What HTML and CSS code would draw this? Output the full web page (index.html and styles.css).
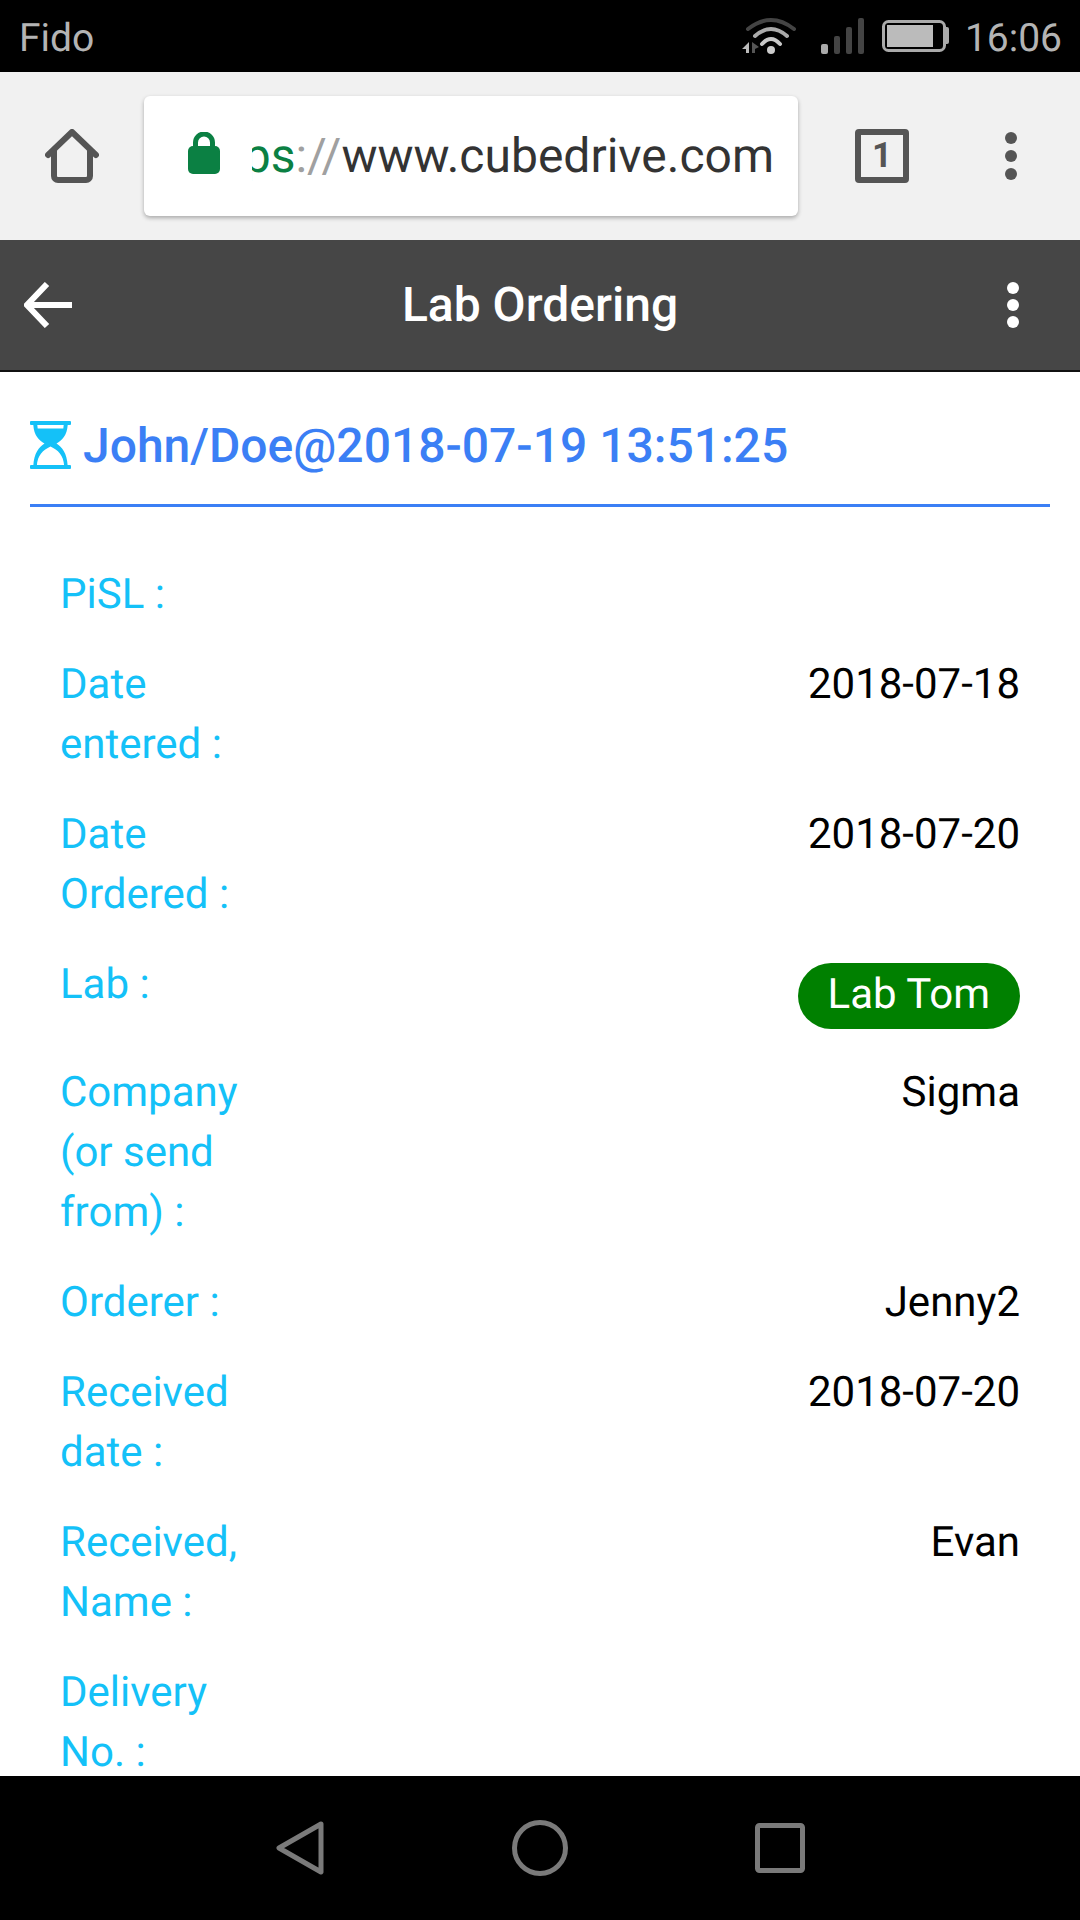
FILE: index.html
```html
<!DOCTYPE html>
<html>
<head lang="en">
    <meta charset="UTF-8">
    <title>Lab Ordering</title>
    <link rel="stylesheet" href="styles.css">
</head>
<body>
<div id="phone">
    <div id="status">
        <span class="carrier">Fido</span>
        <div class="status-right">
            <svg class="ic-wifi" width="56" height="38" viewBox="0 0 56 38">
                <path d="M7 12 Q30 -6 53 12" fill="none" stroke="#444" stroke-width="4" stroke-linecap="round"/>
                <path d="M14 19 Q30 5 46 19" fill="none" stroke="#aaa" stroke-width="4" stroke-linecap="round"/>
                <path d="M21 27 Q30 17 39 27" fill="none" stroke="#c8c8c8" stroke-width="4" stroke-linecap="round"/>
                <circle cx="30" cy="33" r="4" fill="#ccc"/>
                <path d="M8 25 L8 36 L5 36 L5 32 L1 32 Z" fill="#bbb"/>
                <path d="M11 25 L18 30 L14 32 L14 36 L11 36 Z" fill="#555"/>
            </svg>
            <svg class="ic-signal" width="43" height="36" viewBox="0 0 43 36">
                <rect x="0" y="26" width="7" height="10" rx="2" fill="#aaa"/>
                <rect x="13" y="18" width="6" height="18" rx="2" fill="#444"/>
                <rect x="25" y="9" width="6" height="27" rx="2" fill="#444"/>
                <rect x="37" y="0" width="6" height="36" rx="2" fill="#444"/>
            </svg>
            <svg class="ic-battery" width="67" height="32" viewBox="0 0 67 32">
                <rect x="1.5" y="1.5" width="61" height="29" rx="5" fill="none" stroke="#aaa" stroke-width="3"/>
                <rect x="5" y="5" width="46" height="22" fill="#bbb"/>
                <path d="M64 7 h1 a2 2 0 0 1 2 2 v13 a2 2 0 0 1 -2 2 h-1 Z" fill="#aaa"/>
            </svg>
            <span class="time">16:06</span>
        </div>
    </div>

    <div id="toolbar">
        <svg class="tb-home" width="54" height="54" viewBox="0 0 54 54">
            <path d="M3 26 L27 3 L51 26 M9 21 V47 a4 4 0 0 0 4 4 H41 a4 4 0 0 0 4 -4 V21" fill="none" stroke="#555" stroke-width="6" stroke-linecap="round" stroke-linejoin="round"/>
        </svg>
        <div class="omnibox">
            <svg class="lock" width="32" height="42" viewBox="0 0 32 42">
                <path d="M7.5 17 V10.5 a8.5 8.5 0 0 1 17 0 V17" fill="none" stroke="#0b8043" stroke-width="5"/>
                <rect x="0" y="14" width="32" height="28" rx="5" fill="#0b8043"/>
            </svg>
            <div class="url"><span class="url-inner"><span class="scheme">https</span><span class="sep">://</span>www.cubedrive.com</span></div>
        </div>
        <div class="tab-count">1</div>
        <div class="dots dots-grey"><i></i><i></i><i></i></div>
    </div>

    <div id="appbar">
        <svg class="back" width="48" height="46" viewBox="0 0 48 46">
            <path d="M48 23 H4 M23 2 L3 23 L23 44" fill="none" stroke="#fff" stroke-width="6"/>
        </svg>
        <div class="app-title">Lab Ordering</div>
        <div class="dots dots-white"><i></i><i></i><i></i></div>
    </div>

    <div id="content">
        <div class="form-head">
            <svg width="41" height="48" viewBox="0 0 41 48">
                <rect x="0" y="0" width="41" height="4" rx="1" fill="#14c1f8"/>
                <rect x="0" y="44" width="41" height="4" rx="1" fill="#14c1f8"/>
                <path fill-rule="evenodd" d="M3.3 4 C4 15 9 19 14.5 22.5 C9 26 4 32 3.3 45 H37.7 C37 32 32 26 26.5 22.5 C32 19 37 15 37.7 4 Z M7.3 4 H33.7 L33.3 7.5 H7.7 Z M6.8 45 C7.5 34 13 29 20.5 25.5 C28 29 33.5 34 34.2 45 Z" fill="#14c1f8"/>
            </svg>
            <span>John/Doe@2018-07-19 13:51:25</span>
        </div>
        <div class="rows">
            <div class="row"><div class="lbl">PiSL :</div><div class="val"></div></div>
            <div class="row"><div class="lbl">Date entered :</div><div class="val">2018-07-18</div></div>
            <div class="row"><div class="lbl">Date Ordered :</div><div class="val">2018-07-20</div></div>
            <div class="row"><div class="lbl">Lab :</div><div class="val"><span class="pill">Lab Tom</span></div></div>
            <div class="row"><div class="lbl">Company (or send from) :</div><div class="val">Sigma</div></div>
            <div class="row"><div class="lbl">Orderer :</div><div class="val">Jenny2</div></div>
            <div class="row"><div class="lbl">Received date :</div><div class="val">2018-07-20</div></div>
            <div class="row"><div class="lbl">Received, Name :</div><div class="val">Evan</div></div>
            <div class="row"><div class="lbl">Delivery No. :</div><div class="val"></div></div>
        </div>
    </div>

    <div id="navbar">
        <svg width="48" height="54" viewBox="0 0 48 54">
            <path d="M45 3 L3 27 L45 51 Z" fill="none" stroke="#7a7a7a" stroke-width="5" stroke-linejoin="round"/>
        </svg>
        <svg class="nav-home" width="56" height="56" viewBox="0 0 56 56">
            <circle cx="28" cy="28" r="25.5" fill="none" stroke="#7a7a7a" stroke-width="5"/>
        </svg>
        <svg width="50" height="50" viewBox="0 0 50 50">
            <rect x="2.5" y="2.5" width="45" height="45" rx="2" fill="none" stroke="#7a7a7a" stroke-width="5"/>
        </svg>
    </div>
</div>
</body>
</html>
```
FILE: styles.css
```css
*{
    margin: 0;
    padding: 0;
    box-sizing: border-box;
}
html,body{
    width: 1080px;
    height: 1920px;
    overflow: hidden;
}
body{
    font-family: Roboto, "Liberation Sans", sans-serif;
    text-rendering: geometricPrecision;
    background: #ffffff;
}
#phone{
    width: 1080px;
    height: 1920px;
    display: flex;
    flex-direction: column;
}

/* status bar */
#status{
    height: 72px;
    flex: none;
    background: #000000;
    display: flex;
    align-items: center;
    justify-content: space-between;
    padding: 0 18px 0 19px;
    font-size: 39px;
    color: #b4b4b4;
}
.status-right{
    display: flex;
    align-items: center;
}
.carrier,.time{
    margin-top: 4px;
}
.ic-wifi{
    margin-right: 24px;
}
.ic-signal{
    margin-right: 18px;
}
.ic-battery{
    margin-right: 16px;
}

/* browser toolbar */
#toolbar{
    height: 168px;
    flex: none;
    background: #f1f1f1;
    display: flex;
    align-items: center;
    padding-left: 45px;
}
.omnibox{
    width: 654px;
    height: 120px;
    margin-left: 45px;
    background: #ffffff;
    border-radius: 6px;
    box-shadow: 0 2px 4px rgba(0,0,0,0.3);
    display: flex;
    align-items: center;
    padding-left: 44px;
    padding-right: 24px;
}
.lock{
    flex: none;
    margin-top: -6px;
}
.url{
    flex: 1;
    min-width: 0;
    margin-left: 32px;
    overflow: hidden;
    display: flex;
    justify-content: flex-end;
    font-size: 48px;
    line-height: 60px;
    color: #333333;
    white-space: nowrap;
}
.url-inner{
    flex: none;
}
.scheme{
    color: #0b8043;
}
.sep{
    color: #a0a0a0;
}
.tab-count{
    width: 54px;
    height: 54px;
    margin-left: 57px;
    border: 6px solid #555555;
    border-radius: 4px;
    color: #555555;
    font-size: 35px;
    font-weight: 700;
    line-height: 42px;
    text-align: center;
}
.dots{
    display: flex;
    flex-direction: column;
}
.dots i{
    display: block;
    width: 12px;
    height: 12px;
    border-radius: 50%;
    margin-bottom: 6px;
}
.dots i:last-child{
    margin-bottom: 0;
}
.dots-grey{
    margin-left: 96px;
}
.dots-grey i{
    background: #555555;
}
.dots-white{
    margin-right: 61px;
}
.dots-white i{
    background: #ffffff;
    margin-bottom: 5px;
}

/* app bar */
#appbar{
    height: 132px;
    flex: none;
    background: #464646;
    border-bottom: 2px solid #111111;
    display: flex;
    align-items: center;
    justify-content: space-between;
    padding-left: 24px;
    position: relative;
}
.app-title{
    position: absolute;
    left: 0;
    right: 0;
    margin-top: -2px;
    text-align: center;
    color: #ffffff;
    font-size: 48px;
    font-weight: 500;
}

/* content */
#content{
    flex: 1;
    min-height: 0;
    overflow: hidden;
    padding: 0 30px;
}
.form-head{
    height: 135px;
    padding-top: 14px;
    border-bottom: 3px solid #3b7ff5;
    display: flex;
    align-items: center;
    color: #3b7ff5;
    font-size: 48px;
    font-weight: 500;
}
.form-head svg{
    flex: none;
    margin-right: 12px;
}
.rows{
    padding: 43px 30px 0 30px;
}
.row{
    display: flex;
    justify-content: space-between;
    padding: 15px 0;
    font-size: 42px;
    line-height: 60px;
}
.lbl{
    width: 190px;
    color: #14c1f8;
}
.val{
    color: #000000;
    text-align: right;
}
.pill{
    display: block;
    margin: 8px 0 4px;
    height: 66px;
    padding: 0 30px;
    border-radius: 33px;
    background: #008000;
    color: #ffffff;
    line-height: 64px;
}

/* nav bar */
#navbar{
    height: 144px;
    flex: none;
    background: #000000;
    display: flex;
    align-items: center;
    padding-left: 276px;
    gap: 188px;
}
.nav-home{
    margin-right: -1px;
}
```
